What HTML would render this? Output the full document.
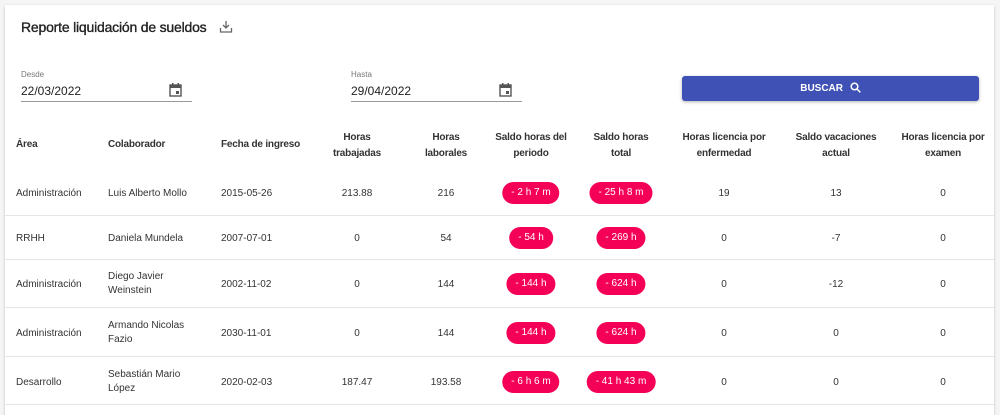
<!DOCTYPE html>
<html><head><meta charset="utf-8"><style>
*{margin:0;padding:0;box-sizing:border-box}
body{width:1000px;height:408px;background:#f5f5f5;font-family:"Liberation Sans",sans-serif;color:#333;position:relative;overflow:hidden}
.card{position:absolute;left:5px;top:5px;width:989px;height:410px;background:#fff;box-shadow:0 1px 3px rgba(0,0,0,.2)}
.a{position:absolute;white-space:nowrap}
.t{font-size:14px;letter-spacing:-0.2px;left:21px;top:19px;color:#222;-webkit-text-stroke:0.35px #222}
.lab{font-size:8px;color:#777}
.inp{font-size:12px;color:#222}
.line{position:absolute;height:1px;background:#999}
.btn{position:absolute;left:682px;top:76px;width:297px;height:25px;background:#3f51b5;border-radius:3px;box-shadow:0 1px 3px rgba(0,0,0,.3);color:#fff;font-size:10px;font-weight:bold;text-align:center;line-height:25px}
.c{position:absolute;font-size:10px;text-align:center;transform:translateX(-50%);line-height:16px;white-space:nowrap}
.h{font-weight:bold;color:#333;letter-spacing:-0.2px}
.l{position:absolute;font-size:10px;line-height:14px;white-space:nowrap}
.hr{position:absolute;left:5px;width:989px;height:1px;background:#e6e6e6}
.p{display:inline-block;background:#f50057;color:#fff;border-radius:11px;height:22px;line-height:22px;padding:0 9px;font-size:10px}
</style></head><body>
<div class="card"></div>
<div class="a t">Reporte liquidación de sueldos</div>
<svg class="a" style="left:219px;top:20px" width="14" height="14" viewBox="0 0 14 14" fill="none" stroke="#666" stroke-width="1.3"><path d="M7 1v7M4 5l3 3 3-3M1.5 8v4h11V8"/></svg>
<div class="a lab" style="left:21px;top:70px">Desde</div>
<div class="a inp" style="left:21px;top:84px">22/03/2022</div>
<div class="line" style="left:21px;top:101px;width:171px"></div>
<div class="a lab" style="left:351px;top:70px">Hasta</div>
<div class="a inp" style="left:351px;top:84px">29/04/2022</div>
<div class="line" style="left:351px;top:101px;width:171px"></div>
<svg class="a" style="left:169px;top:83px" width="13" height="14" viewBox="0 0 13 14"><rect x="1" y="2" width="11" height="11" fill="none" stroke="#555" stroke-width="1.4"/><rect x="1" y="2" width="11" height="3" fill="#555"/><rect x="3" y="0" width="1.5" height="3" fill="#555"/><rect x="8.5" y="0" width="1.5" height="3" fill="#555"/><rect x="7" y="8" width="3" height="3" fill="#555"/></svg>
<svg class="a" style="left:499px;top:83px" width="13" height="14" viewBox="0 0 13 14"><rect x="1" y="2" width="11" height="11" fill="none" stroke="#555" stroke-width="1.4"/><rect x="1" y="2" width="11" height="3" fill="#555"/><rect x="3" y="0" width="1.5" height="3" fill="#555"/><rect x="8.5" y="0" width="1.5" height="3" fill="#555"/><rect x="7" y="8" width="3" height="3" fill="#555"/></svg>
<div class="btn">BUSCAR <svg style="vertical-align:-2px;margin-left:4px" width="11" height="11" viewBox="0 0 11 11" fill="none" stroke="#fff" stroke-width="1.5"><circle cx="4.5" cy="4.5" r="3.3"/><path d="M7 7l3.3 3.3"/></svg></div>

<div class="l h" style="left:16px;top:138px">Área</div>
<div class="l h" style="left:108px;top:138px">Colaborador</div>
<div class="l h" style="left:221px;top:138px">Fecha de ingreso</div>
<div class="c h" style="left:357px;top:130px">Horas<br>trabajadas</div>
<div class="c h" style="left:446px;top:130px">Horas<br>laborales</div>
<div class="c h" style="left:531px;top:130px">Saldo horas del<br>periodo</div>
<div class="c h" style="left:621px;top:130px">Saldo horas<br>total</div>
<div class="c h" style="left:724px;top:130px">Horas licencia por<br>enfermedad</div>
<div class="c h" style="left:836px;top:130px">Saldo vacaciones<br>actual</div>
<div class="c h" style="left:943px;top:130px">Horas licencia por<br>examen</div>

<div class="hr" style="top:215px"></div>
<div class="hr" style="top:259px"></div>
<div class="hr" style="top:307px"></div>
<div class="hr" style="top:356px"></div>
<div class="hr" style="top:404px"></div>

<div class="l" style="left:16px;top:187px">Administración</div>
<div class="l" style="left:108px;top:187px">Luis Alberto Mollo</div>
<div class="l" style="left:221px;top:187px">2015-05-26</div>
<div class="c" style="left:357px;top:186px">213.88</div>
<div class="c" style="left:446px;top:186px">216</div>
<div class="c" style="left:531px;top:182px"><span class="p">- 2 h 7 m</span></div>
<div class="c" style="left:621px;top:182px"><span class="p">- 25 h 8 m</span></div>
<div class="c" style="left:724px;top:186px">19</div>
<div class="c" style="left:836px;top:186px">13</div>
<div class="c" style="left:943px;top:186px">0</div>

<div class="l" style="left:16px;top:232px">RRHH</div>
<div class="l" style="left:108px;top:232px">Daniela Mundela</div>
<div class="l" style="left:221px;top:232px">2007-07-01</div>
<div class="c" style="left:357px;top:231px">0</div>
<div class="c" style="left:446px;top:231px">54</div>
<div class="c" style="left:531px;top:227px"><span class="p">- 54 h</span></div>
<div class="c" style="left:621px;top:227px"><span class="p">- 269 h</span></div>
<div class="c" style="left:724px;top:231px">0</div>
<div class="c" style="left:836px;top:231px">-7</div>
<div class="c" style="left:943px;top:231px">0</div>

<div class="l" style="left:16px;top:278px">Administración</div>
<div class="l" style="left:108px;top:270px">Diego Javier<br>Weinstein</div>
<div class="l" style="left:221px;top:278px">2002-11-02</div>
<div class="c" style="left:357px;top:277px">0</div>
<div class="c" style="left:446px;top:277px">144</div>
<div class="c" style="left:531px;top:273px"><span class="p">- 144 h</span></div>
<div class="c" style="left:621px;top:273px"><span class="p">- 624 h</span></div>
<div class="c" style="left:724px;top:277px">0</div>
<div class="c" style="left:836px;top:277px">-12</div>
<div class="c" style="left:943px;top:277px">0</div>

<div class="l" style="left:16px;top:327px">Administración</div>
<div class="l" style="left:108px;top:319px">Armando Nicolas<br>Fazio</div>
<div class="l" style="left:221px;top:327px">2030-11-01</div>
<div class="c" style="left:357px;top:326px">0</div>
<div class="c" style="left:446px;top:326px">144</div>
<div class="c" style="left:531px;top:322px"><span class="p">- 144 h</span></div>
<div class="c" style="left:621px;top:322px"><span class="p">- 624 h</span></div>
<div class="c" style="left:724px;top:326px">0</div>
<div class="c" style="left:836px;top:326px">0</div>
<div class="c" style="left:943px;top:326px">0</div>

<div class="l" style="left:16px;top:376px">Desarrollo</div>
<div class="l" style="left:108px;top:368px">Sebastián Mario<br>López</div>
<div class="l" style="left:221px;top:376px">2020-02-03</div>
<div class="c" style="left:357px;top:375px">187.47</div>
<div class="c" style="left:446px;top:375px">193.58</div>
<div class="c" style="left:531px;top:371px"><span class="p">- 6 h 6 m</span></div>
<div class="c" style="left:621px;top:371px"><span class="p">- 41 h 43 m</span></div>
<div class="c" style="left:724px;top:375px">0</div>
<div class="c" style="left:836px;top:375px">0</div>
<div class="c" style="left:943px;top:375px">0</div>
</body></html>
